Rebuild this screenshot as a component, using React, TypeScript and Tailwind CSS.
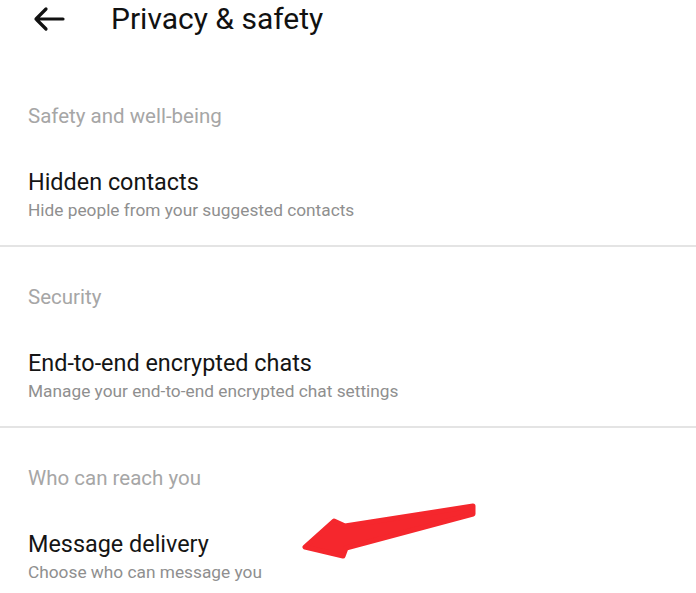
import React from "react";

const sections = [
  {
    header: "Safety and well-being",
    title: "Hidden contacts",
    sub: "Hide people from your suggested contacts",
  },
  {
    header: "Security",
    title: "End-to-end encrypted chats",
    sub: "Manage your end-to-end encrypted chat settings",
  },
  {
    header: "Who can reach you",
    title: "Message delivery",
    sub: "Choose who can message you",
  },
];

export default function App() {
  return (
    <div className="relative w-[696px] h-[593px] overflow-hidden bg-white font-['Roboto',sans-serif]">
      <header className="flex items-center h-[38px]">
        <svg
          className="ml-[33px] w-[32px] h-[26px]"
          viewBox="0 0 32 26"
          fill="none"
          stroke="#111"
          strokeWidth="3.2"
          strokeLinecap="round"
          strokeLinejoin="round"
        >
          <path d="M30 13H3M13 3L3 13l10 10" />
        </svg>
        <h1 className="ml-[46px] text-[30px] text-[#111] leading-none">Privacy &amp; safety</h1>
      </header>

      <div className="mt-[28px]">
        {sections.map((s, i) => (
          <section key={i} className={i < 2 ? "h-[181px] border-b-2 border-[#e4e4e4]" : "h-[181px]"}>
            <div className="px-[28px] pt-[40px] text-[20.5px] text-[#a6a6a6] leading-[20px]">
              {s.header}
            </div>
            <div className="px-[28px] pt-[44px]">
              <div className="text-[23.4px] text-[#151515] leading-[24px]">{s.title}</div>
              <div className="mt-[7px] text-[17.3px] text-[#8f8f8f] leading-[18px]">{s.sub}</div>
            </div>
          </section>
        ))}
      </div>

      <svg
        className="absolute left-[290px] top-[495px] w-[200px] h-[70px]"
        viewBox="0 0 200 70"
      >
        <path
          d="M183 11 L55 31 L44 26 L15 52 L53 61 L56 53 L183 19 Z"
          fill="#f5272d"
          stroke="#f5272d"
          strokeWidth="5"
          strokeLinejoin="round"
        />
      </svg>
    </div>
  );
}
